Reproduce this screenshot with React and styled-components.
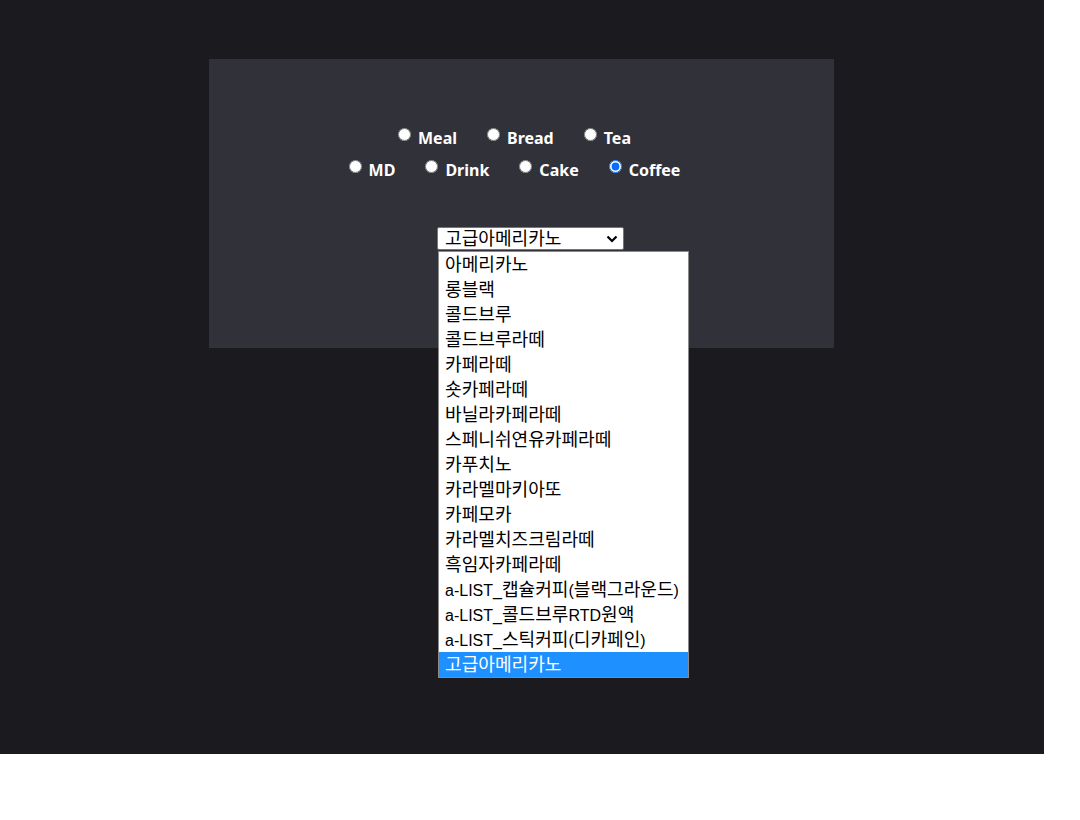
import React, { useState } from "react";
import styled, { createGlobalStyle } from "styled-components";

const GlobalStyle = createGlobalStyle`
	html, body {
		margin: 0;
		padding: 0;
		background: #ffffff;
	}
`;

const menuRows = [
	["Meal", "Bread", "Tea"],
	["MD", "Drink", "Cake", "Coffee"],
];

const coffeeList = [
	"아메리카노",
	"롱블랙",
	"콜드브루",
	"콜드브루라떼",
	"카페라떼",
	"숏카페라떼",
	"바닐라카페라떼",
	"스페니쉬연유카페라떼",
	"카푸치노",
	"카라멜마키아또",
	"카페모카",
	"카라멜치즈크림라떼",
	"흑임자카페라떼",
	"a-LIST_캡슐커피(블랙그라운드)",
	"a-LIST_콜드브루RTD원액",
	"a-LIST_스틱커피(디카페인)",
	"고급아메리카노",
];

// hangul in the fallback CJK font runs narrower than the original, so bump it a bit
function MixedText({ text }) {
	return text
		.split(/([가-힣]+)/)
		.filter(Boolean)
		.map((part, i) =>
			/[가-힣]/.test(part) ? <Hangul key={i}>{part}</Hangul> : part
		);
}

export default function App() {
	const [category, setCategory] = useState("Coffee");
	const [item, setItem] = useState("고급아메리카노");

	return (
		<>
			<GlobalStyle />
			<Page>
				<Panel>
					<RadioGroup>
						{menuRows.map((row, i) => (
							<RadioRow key={i}>
								{row.map((name) => (
									<RadioLabel key={name}>
										<Radio
											type="radio"
											name="category"
											checked={category === name}
											onChange={() => setCategory(name)}
										/>
										<span>{name}</span>
									</RadioLabel>
								))}
							</RadioRow>
						))}
					</RadioGroup>
					<SelectWrap>
						<SelectBox>
							<span>
								<MixedText text={item} />
							</span>
							<svg width="12" height="8" viewBox="0 0 12 8">
								<path
									d="M1.5 1.5 L6 6 L10.5 1.5"
									fill="none"
									stroke="#000"
									strokeWidth="2.2"
								/>
							</svg>
						</SelectBox>
						<DropList>
							{coffeeList.map((name) => (
								<DropItem
									key={name}
									$active={name === item}
									onClick={() => setItem(name)}
								>
									<MixedText text={name} />
								</DropItem>
							))}
						</DropList>
					</SelectWrap>
				</Panel>
			</Page>
		</>
	);
}

const Page = styled.div`
	width: 1044px;
	height: 754px;
	background: #1b1b1f;
	padding-top: 59px;
	box-sizing: border-box;
	display: flex;
	flex-direction: column;
	align-items: center;
`;

const Panel = styled.div`
	width: 625px;
	height: 289px;
	margin-left: -1px;
	background: #313139;
	padding-top: 68px;
	box-sizing: border-box;
	display: flex;
	flex-direction: column;
	align-items: center;
`;

const RadioGroup = styled.div`
	display: flex;
	flex-direction: column;
	row-gap: 10px;
	margin-right: 14px;
`;

const RadioRow = styled.div`
	display: flex;
	justify-content: center;
	column-gap: 30px;
	height: 22px;
`;

const RadioLabel = styled.label`
	display: flex;
	align-items: flex-start;
	font-family: "Noto Sans", "Open Sans", sans-serif;
	font-weight: 700;
	font-size: 16px;
	line-height: 22px;
	color: #ffffff;
	cursor: pointer;
`;

const Radio = styled.input`
	width: 13px;
	height: 13px;
	margin: 1px 7px 0 0;
	accent-color: #0a6cff;
`;

const SelectWrap = styled.div`
	position: relative;
	margin-top: 46px;
	margin-left: 18px;
	width: 187px;
`;

const SelectBox = styled.div`
	height: 23px;
	box-sizing: border-box;
	border: 1px solid #767676;
	border-radius: 2px;
	background: #ffffff;
	display: flex;
	align-items: center;
	justify-content: space-between;
	padding: 0 5px 0 7px;
	font-family: "Liberation Sans", "Noto Sans CJK KR", sans-serif;
	font-size: 16px;
	line-height: 21px;
	color: #000000;
`;

const Hangul = styled.span`
	font-family: "Noto Sans CJK KR", sans-serif;
	font-size: 1.13em;
	line-height: 1;
`;

const DropList = styled.ul`
	position: absolute;
	top: 24px;
	left: 1px;
	width: 251px;
	margin: 0;
	padding: 0;
	list-style: none;
	background: #ffffff;
	border: 1px solid #8a8a8a;
	box-sizing: border-box;
`;

const DropItem = styled.li`
	height: 25px;
	box-sizing: border-box;
	padding: 2px 0 0 6px;
	line-height: 23px;
	font-family: "Liberation Sans", "Noto Sans CJK KR", sans-serif;
	font-size: 16px;
	white-space: nowrap;
	color: ${(p) => (p.$active ? "#ffffff" : "#000000")};
	background: ${(p) => (p.$active ? "#1e90ff" : "transparent")};
	cursor: default;
`;
